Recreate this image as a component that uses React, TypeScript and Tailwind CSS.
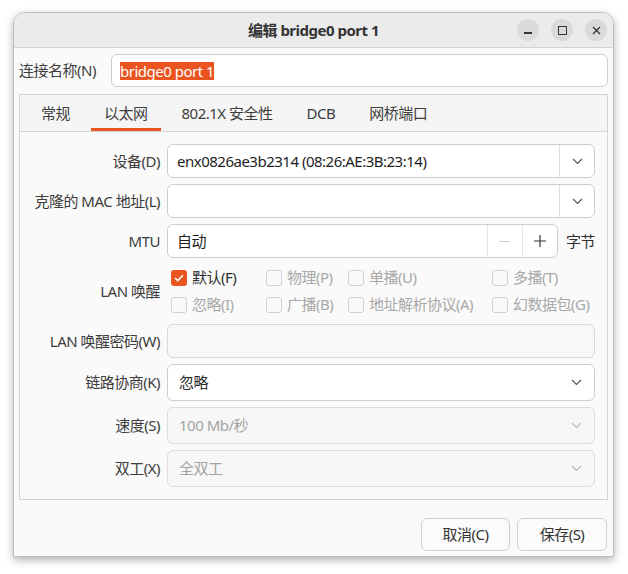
import React from "react";

const font = { fontFamily: '"Noto Sans", "Noto Sans CJK SC", sans-serif' };

const Chevron = ({ muted }: { muted?: boolean }) => (
  <svg width="11" height="7" viewBox="0 0 11 7" fill="none">
    <path d="M1 1 L5.5 5.5 L10 1" stroke={muted ? "#b8b8b8" : "#555555"} strokeWidth="1.2" />
  </svg>
);

const Label = ({ children }: { children: React.ReactNode }) => (
  <div className="flex items-center justify-end text-[15px] text-[#3d3d3d] whitespace-nowrap">{children}</div>
);

const EntryCombo = ({ value }: { value?: string }) => (
  <div className="flex h-[34px] rounded-[6px] border border-[#cdcdcd] bg-white">
    <div className="flex-1 flex items-center pl-[9px] text-[15px] text-[#1e1e1e] whitespace-nowrap">{value}</div>
    <div className="w-[35px] flex items-center justify-center border-l border-[#dedede]">
      <Chevron />
    </div>
  </div>
);

const Combo = ({ value, disabled }: { value: string; disabled?: boolean }) => (
  <div
    className={
      disabled
        ? "flex items-center justify-between h-[37px] rounded-[6px] border border-[#dcdcdc] bg-[#f7f7f7] pl-[11px] pr-[12px] text-[15px] text-[#a3a3a3]"
        : "flex items-center justify-between h-[37px] rounded-[6px] border border-[#cdcdcd] bg-white pl-[11px] pr-[12px] text-[15px] text-[#2a2a2a]"
    }
  >
    <span>{value}</span>
    <Chevron muted={disabled} />
  </div>
);

const Check = ({ label, checked, disabled }: { label: string; checked?: boolean; disabled?: boolean }) => (
  <div className="flex items-center gap-[5px] pl-[4px] text-[15px] whitespace-nowrap">
    {checked ? (
      <div className="w-[16px] h-[16px] rounded-[3px] bg-[#E95420] flex items-center justify-center">
        <svg width="10" height="8" viewBox="0 0 10 8" fill="none">
          <path d="M1 4 L3.8 6.6 L9 1.2" stroke="white" strokeWidth="1.6" />
        </svg>
      </div>
    ) : (
      <div className="w-[16px] h-[16px] rounded-[3px] border border-[#d2d2d2] bg-[#fafafa]" />
    )}
    <span className={disabled ? "text-[#a8a8a8]" : "text-[#2e2e2e]"}>{label}</span>
  </div>
);

const tabs = ["常规", "以太网", "802.1X 安全性", "DCB", "网桥端口"];

const App = () => {
  return (
    <div className="w-[628px] h-[574px] bg-white pt-[12px] pl-[13px] tracking-[-0.5px]" style={font}>
      <div className="w-[601px] h-[545px] flex flex-col rounded-t-[12px] border border-[#bdbdbd] bg-[#fafafa] overflow-hidden shadow-[0_3px_8px_rgba(0,0,0,0.3)]">
        {/* title bar */}
        <div className="h-[35px] shrink-0 grid grid-cols-[1fr_auto_1fr] items-center bg-[#ebebeb] border-b border-[#d2d2d2]">
          <div />
          <div className="text-[15px] font-bold text-[#333333]">编辑 bridge0 port 1</div>
          <div className="flex justify-end gap-[12px] pr-[6px]">
            <div className="w-[22px] h-[22px] rounded-full bg-[#dadada] flex items-center justify-center">
              <div className="w-[8px] h-[1.5px] bg-[#333] mt-[6px]" />
            </div>
            <div className="w-[22px] h-[22px] rounded-full bg-[#dadada] flex items-center justify-center">
              <div className="w-[9px] h-[9px] border-[1.3px] border-[#333]" />
            </div>
            <div className="w-[22px] h-[22px] rounded-full bg-[#dadada] flex items-center justify-center">
              <svg width="9" height="9" viewBox="0 0 9 9">
                <path d="M1 1 L8 8 M8 1 L1 8" stroke="#333" strokeWidth="1.3" />
              </svg>
            </div>
          </div>
        </div>

        <div className="flex-1 flex flex-col px-[5px] pt-[6px] pb-[5px]">
          {/* name row */}
          <div className="flex items-center h-[33px]">
            <div className="w-[92px] text-[15px] text-[#3d3d3d] whitespace-nowrap">连接名称(N)</div>
            <div className="flex-1 h-full flex items-center rounded-[6px] border border-[#cdcdcd] bg-white pl-[8px]">
              <span className="bg-[#E95420] text-white text-[15px] leading-[18px]">bridge0 port 1</span>
            </div>
          </div>

          {/* notebook */}
          <div className="mt-[7px] border border-[#d4d4d4] flex flex-col">
            <div className="h-[37px] flex pl-[4px] bg-[#f5f5f5] border-b border-[#d4d4d4]">
              {tabs.map((t, i) => (
                <div key={t} className="relative mx-[4px] px-[13px] flex items-center text-[15px] text-[#3d3d3d] whitespace-nowrap">
                  {t}
                  {i === 1 && <div className="absolute left-0 right-0 bottom-0 h-[3px] bg-[#E95420]" />}
                </div>
              ))}
            </div>

            <div className="grid grid-cols-[128px_1fr] gap-x-[7px] gap-y-[6px] px-[12px] pt-[12px] pb-[12px] bg-[#fafafa]">
              <Label>设备(D)</Label>
              <EntryCombo value="enx0826ae3b2314 (08:26:AE:3B:23:14)" />

              <Label>克隆的 MAC 地址(L)</Label>
              <EntryCombo />

              <Label>MTU</Label>
              <div className="flex items-center gap-[8px]">
                <div className="flex-1 flex h-[34px] rounded-[6px] border border-[#cdcdcd] bg-white">
                  <div className="flex-1 flex items-center pl-[9px] text-[15px] text-[#1e1e1e]">自动</div>
                  <div className="w-[35px] flex items-center justify-center border-l border-[#e4e4e4]">
                    <div className="w-[11px] h-[1px] bg-[#cfcfcf]" />
                  </div>
                  <div className="w-[35px] flex items-center justify-center border-l border-[#e4e4e4]">
                    <svg width="12" height="12" viewBox="0 0 12 12">
                      <path d="M6 0 V12 M0 6 H12" stroke="#333" strokeWidth="1.2" />
                    </svg>
                  </div>
                </div>
                <span className="text-[15px] text-[#2e2e2e]">字节</span>
              </div>

              <Label>LAN 唤醒</Label>
              <div className="grid grid-cols-[95px_82px_144px_1fr] grid-rows-[27px_27px]">
                <Check label="默认(F)" checked />
                <Check label="物理(P)" disabled />
                <Check label="单播(U)" disabled />
                <Check label="多播(T)" disabled />
                <Check label="忽略(I)" disabled />
                <Check label="广播(B)" disabled />
                <Check label="地址解析协议(A)" disabled />
                <Check label="幻数据包(G)" disabled />
              </div>

              <Label>LAN 唤醒密码(W)</Label>
              <div className="h-[34px] rounded-[6px] border border-[#d8d8d8] bg-[#f8f8f8]" />

              <Label>链路协商(K)</Label>
              <Combo value="忽略" />

              <Label>速度(S)</Label>
              <Combo value="100 Mb/秒" disabled />

              <Label>双工(X)</Label>
              <Combo value="全双工" disabled />
            </div>
          </div>

          {/* buttons */}
          <div className="mt-auto flex justify-end gap-[7px] pr-[1px]">
            <button className="w-[89px] h-[33px] rounded-[6px] border border-[#cfcfcf] bg-[#fbfbfb] text-[15px] text-[#333]">取消(C)</button>
            <button className="w-[90px] h-[33px] rounded-[6px] border border-[#cfcfcf] bg-[#fbfbfb] text-[15px] text-[#333]">保存(S)</button>
          </div>
        </div>
      </div>
    </div>
  );
};

export default App;
